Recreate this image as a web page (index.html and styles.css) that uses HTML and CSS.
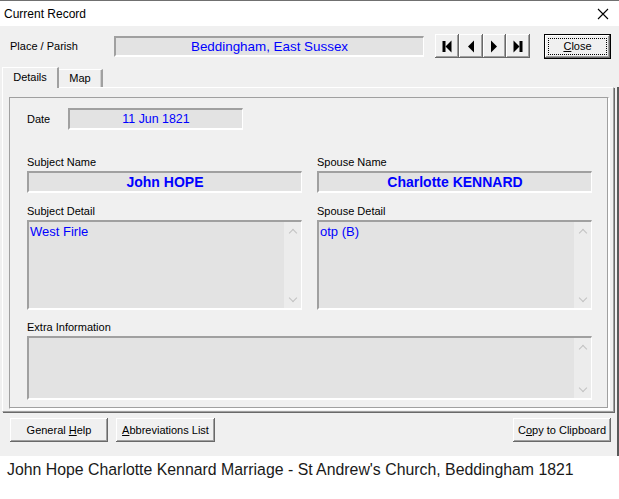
FILE: index.html
```html
<!DOCTYPE html>
<html>
<head>
<meta charset="utf-8">
<link rel="stylesheet" href="styles.css">
</head>
<body>
<div class="window">
  <div class="titlebar">
    <span class="title">Current Record</span>
    <svg class="xicon" width="12" height="12" viewBox="0 0 12 12"><path d="M1 1L11 11M11 1L1 11" stroke="#000" stroke-width="1.1" fill="none"/></svg>
  </div>
  <div class="toprow">
    <span class="lbl place-lbl">Place / Parish</span>
    <div class="field place-field">Beddingham, East Sussex</div>
    <div class="nav">
      <div class="btn navbtn"><svg width="12" height="13" viewBox="0 0 12 13"><rect x="1.5" y="1" width="3" height="11" fill="#000"/><path d="M10.5 0.5V12.5L4.5 6.5Z" fill="#000"/></svg></div>
      <div class="btn navbtn"><svg width="12" height="13" viewBox="0 0 12 13"><path d="M9 0.5V12.5L3 6.5Z" fill="#000"/></svg></div>
      <div class="btn navbtn"><svg width="12" height="13" viewBox="0 0 12 13"><path d="M3 0.5V12.5L9 6.5Z" fill="#000"/></svg></div>
      <div class="btn navbtn"><svg width="12" height="13" viewBox="0 0 12 13"><path d="M1.5 0.5V12.5L7.5 6.5Z" fill="#000"/><rect x="7.5" y="1" width="3" height="11" fill="#000"/></svg></div>
    </div>
    <div class="btn closebtn"><span class="focus"><span><u>C</u>lose</span></span></div>
  </div>
  <div class="tabs">
    <div class="tab active">Details</div>
    <div class="tab">Map</div>
    <div class="tabfill"></div>
  </div>
  <div class="lower">
    <div class="panel">
      <div class="frame">
        <div class="daterow">
          <span class="lbl date-lbl">Date</span>
          <div class="field date-field">11 Jun 1821</div>
        </div>
        <div class="pair names">
          <div class="col">
            <div class="lbl cap">Subject Name</div>
            <div class="field name-field">John HOPE</div>
          </div>
          <div class="col">
            <div class="lbl cap">Spouse Name</div>
            <div class="field name-field">Charlotte KENNARD</div>
          </div>
        </div>
        <div class="pair details">
          <div class="col">
            <div class="lbl cap">Subject Detail</div>
            <div class="field memo detail-memo">
              <div class="memotext">West Firle</div>
              <div class="sbar"><span class="chev up"></span><span class="chev down"></span></div>
            </div>
          </div>
          <div class="col">
            <div class="lbl cap">Spouse Detail</div>
            <div class="field memo detail-memo">
              <div class="memotext">otp (B)</div>
              <div class="sbar"><span class="chev up"></span><span class="chev down"></span></div>
            </div>
          </div>
        </div>
        <div class="extra">
          <div class="lbl cap">Extra Information</div>
          <div class="field memo extra-memo">
            <div class="memotext"></div>
            <div class="sbar"><span class="chev up"></span><span class="chev down"></span></div>
          </div>
        </div>
      </div>
    </div>
    <div class="bottomrow">
      <div class="btn wbtn"><span>General <u>H</u>elp</span></div>
      <div class="btn wbtn"><span><u>A</u>bbreviations List</span></div>
      <div class="spacer"></div>
      <div class="btn wbtn"><span>C<u>o</u>py to Clipboard</span></div>
    </div>
  </div>
</div>
<div class="caption">John Hope Charlotte Kennard Marriage - St Andrew's Church, Beddingham 1821</div>
</body>
</html>
```

FILE: styles.css
```css
* { box-sizing: border-box; }
html, body { margin: 0; padding: 0; background: #fff; }
body { width: 619px; height: 499px; overflow: hidden; font-family: "Liberation Sans", Arial, sans-serif; }

.window {
  width: 619px;
  height: 456px;
  background: #f0f0f0;
  border-top: 1px solid #707070;
}

.titlebar {
  height: 25px;
  background: #fff;
  display: flex;
  align-items: center;
  justify-content: space-between;
  padding: 0 10px 0 4px;
}
.title { font-size: 12px; color: #000; }
.xicon { display: block; }

.lbl { font-size: 11px; color: #000; line-height: 14px; }

.field {
  background: #e3e3e3;
  border-style: solid;
  border-width: 2px 1px 2px 2px;
  border-color: #a0a0a0 #fff #fff #a0a0a0;
  color: #0000ff;
  text-align: center;
}

.toprow {
  display: flex;
  align-items: center;
  height: 24px;
  margin-top: 8px;
  padding-left: 10px;
}
.place-lbl { width: 104px; }
.place-field {
  width: 310px;
  height: 21px;
  font-size: 13.4px;
  line-height: 17px;
}
.nav {
  display: grid;
  grid-template-columns: repeat(4, 1fr);
  width: 95px;
  height: 24px;
  margin-left: 11px;
}
.btn {
  background: #f0f0f0;
  box-shadow: inset -1px -1px #696969, inset 1px 1px #fff, inset -2px -2px #a0a0a0, inset 2px 2px #f0f0f0;
  display: flex;
  align-items: center;
  justify-content: center;
  font-size: 11px;
  color: #000;
}
.navbtn svg { display: block; }
.closebtn {
  width: 67px;
  height: 25px;
  margin-left: 14px;
  border: 1px solid #000;
  padding: 3px;
}
.focus {
  display: flex;
  align-items: center;
  justify-content: center;
  width: 100%;
  height: 100%;
  border: 1px dotted #000;
}

.tabs {
  display: flex;
  align-items: flex-end;
  height: 20px;
  margin-top: 9px;
  padding-left: 2px;
}
.tab {
  font-size: 11px;
  height: 18px;
  line-height: 16px;
  border-top: 1px solid #fff;
  border-left: 1px solid #fff;
  border-right: 2px solid #a0a0a0;
  text-align: center;
}
.tab.active {
  width: 57px;
  height: 21px;
  margin-bottom: -1px;
  line-height: 18px;
  background: #f0f0f0;
  position: relative;
  z-index: 1;
}
.tab:not(.active) { width: 44px; border-left: none; box-shadow: inset -1px 0 #d0d0d0; }
.tabfill { flex: 1; }

.lower {
  height: 369px;
  border-right: 2px solid #5a5a5a;
}

.panel {
  width: 612px;
  height: 325px;
  margin-left: 2px;
  border-top: 1px solid #fff;
  border-left: 1px solid #fff;
  border-right: 1px solid #a0a0a0;
  border-bottom: 1px solid #a0a0a0;
  box-shadow: 1px 1px #696969;
  padding: 9px 4px 0 6px;
}
.frame {
  height: 312px;
  border-top: 1px solid #a0a0a0;
  border-left: 1px solid #a0a0a0;
  border-right: 1px solid #fff;
  border-bottom: 1px solid #fff;
  box-shadow: inset -1px -1px #a0a0a0, 1px 1px #fff;
  padding: 10px 16px 0 17px;
}
.daterow { display: flex; align-items: center; height: 22px; }
.date-lbl { width: 41px; }
.date-field { width: 175px; height: 22px; font-size: 12.4px; line-height: 18px; }

.pair {
  display: grid;
  grid-template-columns: 275px 275px;
  column-gap: 15px;
}
.names { margin-top: 25px; }
.details { margin-top: 11px; }
.extra { margin-top: 10px; }
.cap { height: 14px; margin-bottom: 2px; }
.name-field {
  height: 22px;
  font-weight: bold;
  font-size: 14px;
  line-height: 18px;
}
.memo {
  display: flex;
  text-align: left;
  font-size: 13px;
}
.memotext { flex: 1; padding: 2px 1px; line-height: 15px; }
.detail-memo { height: 90px; }
.extra-memo { height: 64px; width: 565px; }
.sbar {
  width: 17px;
  background: #ececec;
  display: flex;
  flex-direction: column;
  justify-content: space-between;
  align-items: center;
  padding: 6px 0 5px;
}
.chev {
  width: 6px;
  height: 6px;
  border-left: 1.2px solid #c2c2c2;
  border-top: 1.2px solid #c2c2c2;
}
.chev.up { transform: translateY(2px) rotate(45deg); }
.chev.down { transform: translateY(-2px) rotate(225deg); }

.bottomrow {
  display: flex;
  margin-top: 6px;
  padding-left: 10px;
  padding-right: 6px;
  height: 24px;
  gap: 8px;
}
.wbtn { width: 98px; height: 24px; }
.wbtn + .wbtn { width: 99px; }
.spacer { flex: 1; }

.caption {
  height: 42px;
  padding-left: 7px;
  padding-top: 4px;
  font-size: 15.85px;
  line-height: 20px;
  color: #1a1a1a;
}
```
